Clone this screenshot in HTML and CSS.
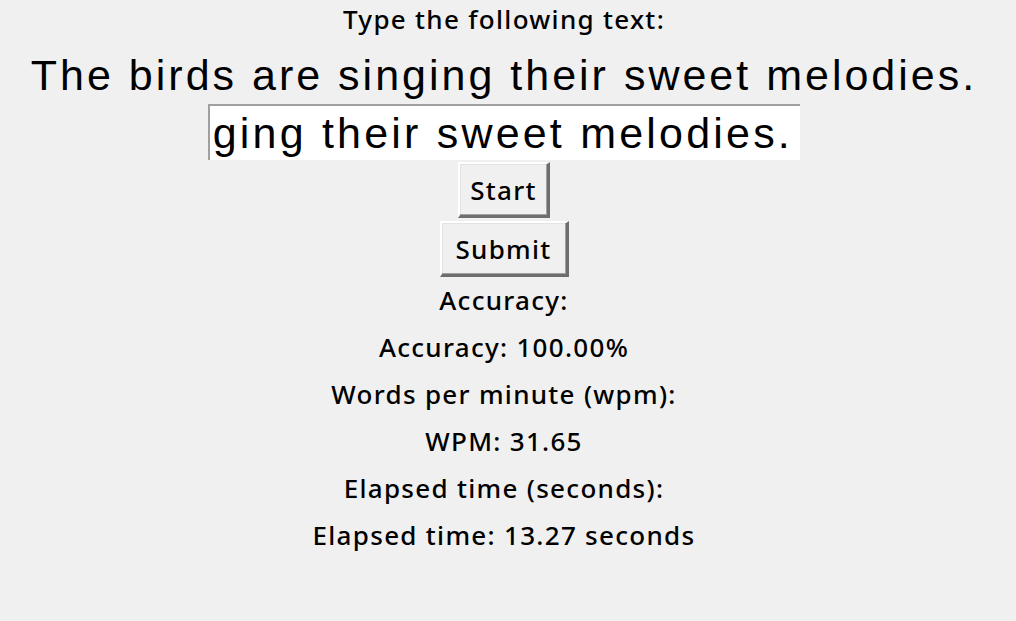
FILE: index.html
```html
<!DOCTYPE html>
<html>
<head>
<meta charset="utf-8">
<link rel="stylesheet" href="styles.css">
</head>
<body>
<div class="app">
  <div class="label title">Type the following text:</div>
  <div class="sentence">The birds are singing their sweet melodies.</div>
  <div class="entry">
    <div class="entry-view"><span class="entry-text">The birds are singing their sweet melodies.</span></div>
  </div>
  <button class="btn btn-start">Start</button>
  <button class="btn btn-submit">Submit</button>
  <div class="label">Accuracy:</div>
  <div class="label">Accuracy: 100.00%</div>
  <div class="label">Words per minute (wpm):</div>
  <div class="label">WPM: 31.65</div>
  <div class="label">Elapsed time (seconds):</div>
  <div class="label">Elapsed time: 13.27 seconds</div>
</div>
</body>
</html>
```
FILE: styles.css
```css
html, body {
  margin: 0;
  padding: 0;
  background: #f0f0f0;
}
body {
  width: 1016px;
  height: 621px;
  overflow: hidden;
}
.app {
  display: flex;
  flex-direction: column;
  align-items: center;
  padding-right: 8px;
  font-family: "Noto Sans", "Open Sans", sans-serif;
  color: #000;
}
.label {
  font-size: 26px;
  font-weight: 500;
  letter-spacing: 1.3px;
  height: 47px;
  line-height: 47px;
  white-space: nowrap;
}
.title {
  height: 38px;
  line-height: 38px;
}
.sentence {
  font-family: "Liberation Sans", Arial, sans-serif;
  font-size: 43px;
  letter-spacing: 3px;
  box-sizing: border-box;
  height: 66px;
  padding-top: 8px;
  line-height: 58px;
  color: #000;
  white-space: nowrap;
}
.entry {
  box-sizing: border-box;
  width: 592px;
  height: 56px;
  background: #fff;
  border-top: 2px solid #a0a0a0;
  border-left: 2px solid #a0a0a0;
  padding: 0 7px 0 4px;
  display: flex;
}
.entry-view {
  flex: 1;
  display: flex;
  justify-content: flex-end;
  overflow: hidden;
}
.entry-text {
  font-family: "Liberation Sans", Arial, sans-serif;
  font-size: 43px;
  letter-spacing: 3.2px;
  line-height: 54px;
  color: #000;
  white-space: nowrap;
  flex: none;
}
.btn {
  box-sizing: border-box;
  font-family: "Noto Sans", "Open Sans", sans-serif;
  font-size: 26px;
  font-weight: 500;
  letter-spacing: 1.3px;
  color: #000;
  background: #f0f0f0;
  border-style: solid;
  border-width: 2px 3px 3px 2px;
  border-color: #ffffff #6e6e6e #6e6e6e #ffffff;
  box-shadow: inset -1px -1px 0 #a0a0a0, inset 1px 1px 0 #e3e3e3;
  padding: 0;
  height: 56px;
  margin-top: 2px;
}
.btn-start {
  width: 92px;
}
.btn-submit {
  width: 129px;
  margin-top: 3px;
}
```
